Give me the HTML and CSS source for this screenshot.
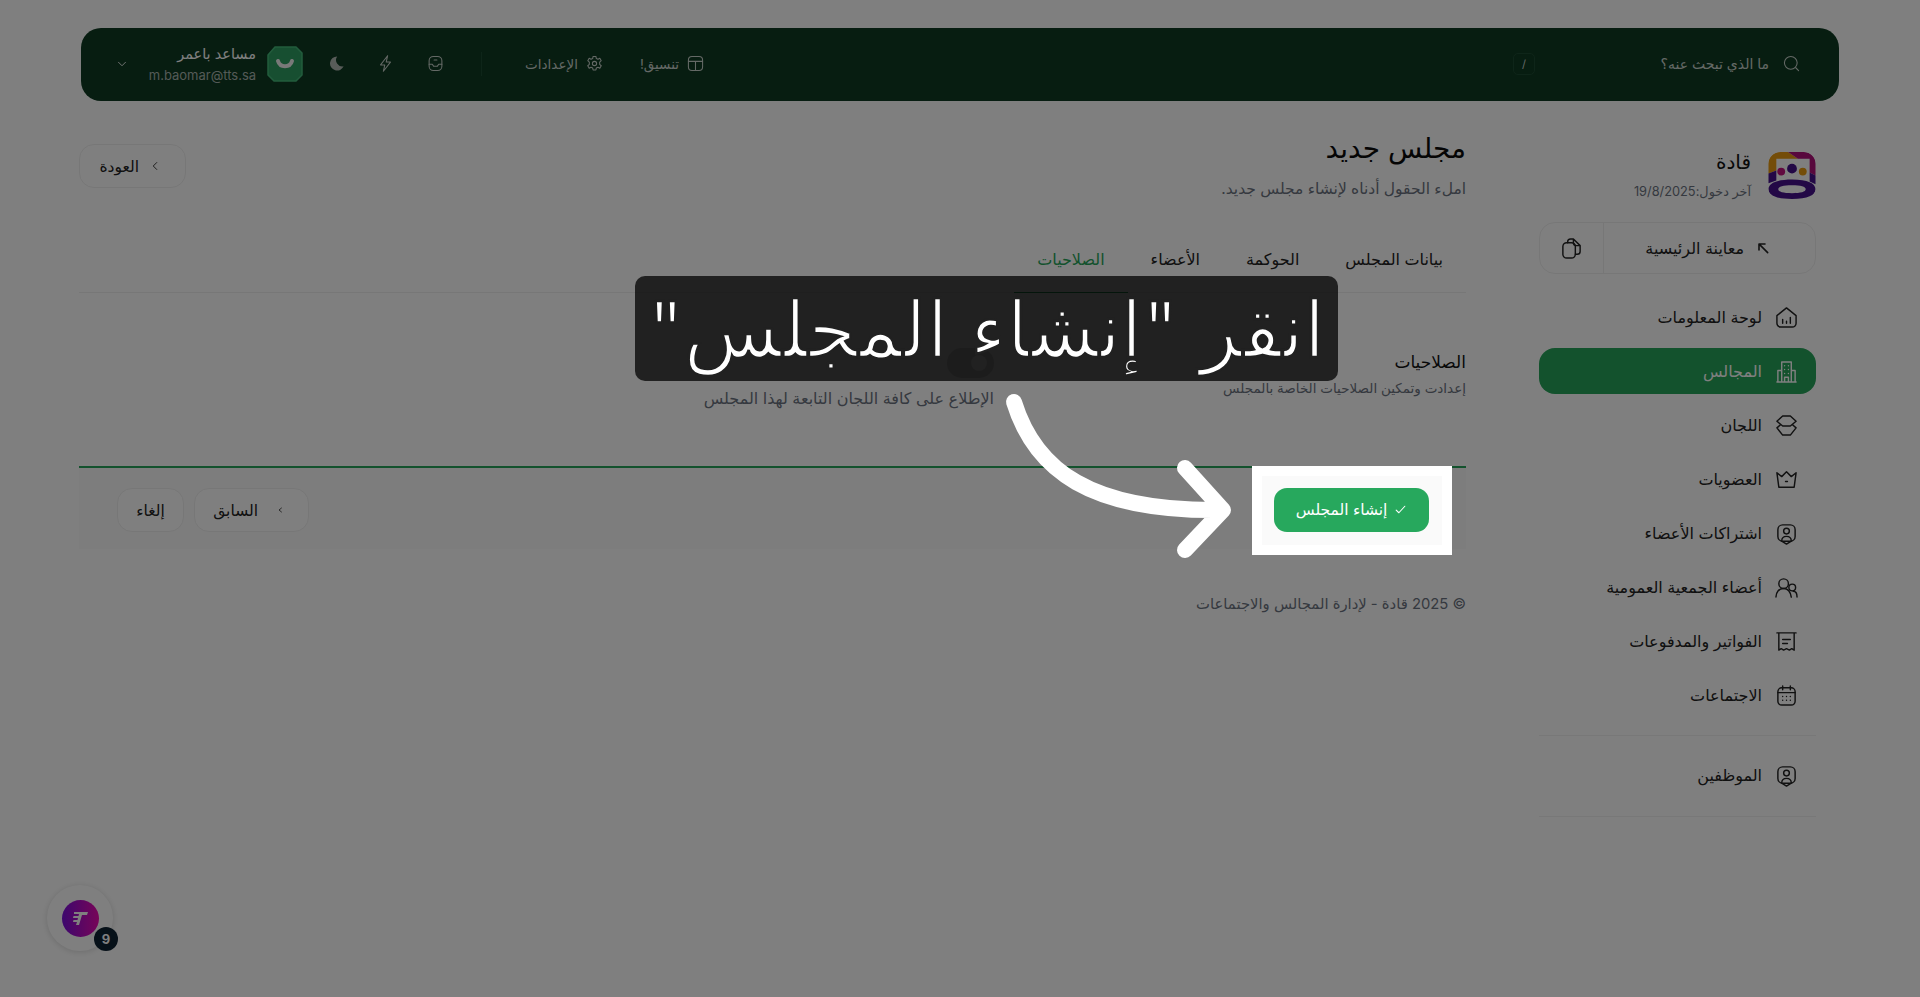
FILE: index.html
```html
<!DOCTYPE html>
<html lang="ar" dir="rtl">
<head>
    <meta charset="UTF-8">
    <meta name="viewport" content="width=device-width, initial-scale=1.0">
    <title>مجلس جديد</title>
    <link rel="stylesheet" href="styles.css">
</head>
<body>

    <div class="shell">
        <!-- Top bar -->
        <header class="topbar">
            <div class="search">
                <svg class="icon" viewBox="0 0 24 24"><circle cx="11" cy="11" r="9"/><path d="M18 18l4 4"/></svg>
                <span>ما الذي تبحث عنه؟</span>
            </div>
            <span class="kbd">/</span>
            <div class="top-actions">
                <a class="top-link"><svg class="icon" viewBox="0 0 24 24"><rect x="2" y="2" width="20" height="20" rx="5"/><path d="M2 9h20M12 9v13"/></svg>تنسيق!</a>
                <a class="top-link"><svg class="icon" viewBox="0 0 24 24"><circle cx="12" cy="12" r="3"/><path d="M10 2h4l.6 3 2.300 1 2.600-1.400 2 3.400-2.200 2v3.200l2.200 2-2 3.400-2.600-1.400-2.300 1-.6 3h-4l-.6-3-2.300-1-2.600 1.400-2-3.400 2.200-2v-3.200l-2.200-2 2-3.400 2.600 1.400 2.300-1z"/></svg>الإعدادات</a>
                <span class="top-divider"></span>
                <svg class="icon" viewBox="0 0 24 24"><rect x="3" y="2" width="18" height="20" rx="6"/><path d="M3 13h4.500l2 3h5l2-3H21M10 7h4"/></svg>
                <svg class="icon bolt" viewBox="0 0 24 24"><path d="M15 1L5 14h6l-2 9 10-13h-6z"/></svg>
                <svg class="icon moon" viewBox="0 0 24 24"><path d="M13 2a10 10 0 1 0 9 14A9 9 0 0 1 13 2z"/></svg>
                <svg class="avatar" viewBox="0 0 38 38">
                    <polygon class="avatar-bg" points="9,2 30,2 36,8 36,30 30,36 8,36 2,30 2,10"/>
                    <path class="avatar-smile" d="M12 16c2 7 12 7 14 0"/>
                </svg>
                <div class="user">
                    <strong>مساعد باعمر</strong>
                    <small>m.baomar@tts.sa</small>
                </div>
                <svg class="icon chevron" viewBox="0 0 24 24"><path d="M6 9l6 6 6-6"/></svg>
            </div>
        </header>

        <div class="layout">
            <!-- Sidebar -->
            <aside class="sidebar">
                <div class="brand">
                    <svg class="brand-logo" viewBox="0 0 48 48">
                        <path d="M0 22V12A12 12 0 0 1 12 0h8l10 7H8v12z" fill="#e89a10"/>
                        <path d="M20 0h16a12 12 0 0 1 12 12v12l-6-3V7H30z" fill="#b0107a"/>
                        <path d="M0 22l8-3v10l-8 3zM48 24l-6-3v9l6 3z" fill="#46108c"/>
                        <circle cx="24" cy="17" r="5" fill="#46108c"/>
                        <circle cx="13" cy="20" r="4" fill="#c3127e"/>
                        <circle cx="35" cy="20" r="4" fill="#e89a10"/>
                        <path fill-rule="evenodd" d="M0 38c0-6 8-10 24-10s24 4 24 10-8 10-24 10S0 44 0 38zm10 0c0 2.500 5 4 14 4s14-1.500 14-4-5-4-14-4-14 1.500-14 4z" fill="#46108c"/>
                    </svg>
                    <div>
                        <h2>قادة</h2>
                        <p>آخر دخول:19/8/2025</p>
                    </div>
                </div>

                <div class="preview">
                    <a class="preview-main"><svg class="icon" viewBox="0 0 24 24"><path d="M19 19L7 7M6 15V6h9"/></svg>معاينة الرئيسية</a>
                    <a class="preview-copy"><svg class="icon" viewBox="0 0 24 24"><rect x="3" y="6" width="13" height="16" rx="4"/><path d="M8 6V5a3 3 0 0 1 3-3h3l7 7v6a3 3 0 0 1-3 3h-2M14 2v4a3 3 0 0 0 3 3h4"/></svg></a>
                </div>

                <nav class="nav">
                    <a class="nav-item"><svg class="icon" viewBox="0 0 24 24"><path d="M2 10l10-8 10 8v8a4 4 0 0 1-4 4H6a4 4 0 0 1-4-4zM8 14v4M12 16v2M16 12v6"/></svg>لوحة المعلومات</a>
                    <a class="nav-item active"><svg class="icon" viewBox="0 0 24 24"><path d="M7 23V2h10v21M7 11H3v12h18V11h-4M2 23h20M10 6h.01M14 6h.01M10 10h.01M14 10h.01M10 14h.01M14 14h.01M10 23v-5h4v5"/></svg>المجالس</a>
                    <a class="nav-item"><svg class="icon" viewBox="0 0 24 24"><path d="M8 2h8l6 5.500-6 5H8l-6-5zM6 11l-4 3.500L8 22h8l6-7.500-4-3.500"/></svg>اللجان</a>
                    <a class="nav-item"><svg class="icon" viewBox="0 0 24 24"><path d="M2 5l5 4 5-5 5 5 5-4-2 15H4zM11 14h2"/></svg>العضويات</a>
                    <a class="nav-item"><svg class="icon" viewBox="0 0 24 24"><rect x="3" y="3" width="18" height="17" rx="5"/><circle cx="12" cy="9.500" r="3"/><path d="M7 20c0-3 2-5 5-5s5 2 5 5l-5 3z"/></svg>اشتراكات الأعضاء</a>
                    <a class="nav-item"><svg class="icon" viewBox="0 0 24 24"><circle cx="9" cy="8" r="5"/><path d="M1 22c0-5 3-9 8-9s7 3 8 9"/><circle cx="18" cy="12" r="3.500"/><path d="M19 16c2.500 0 4 2.500 4 6"/></svg>أعضاء الجمعية العمومية</a>
                    <a class="nav-item"><svg class="icon" viewBox="0 0 24 24"><path d="M2 3h20M4 3v18l2.500-1.500L9 21l3-1.500 3 1.500 2.500-1.500L20 21V3M8 10h8M8 14h5"/></svg>الفواتير والمدفوعات</a>
                    <a class="nav-item"><svg class="icon" viewBox="0 0 24 24"><rect x="3" y="4" width="18" height="18" rx="4"/><path d="M3 9h18M8 2v4M16 2v4M8 13h.01M12 13h.01M16 13h.01M8 17h.01M12 17h.01M16 17h.01"/></svg>الاجتماعات</a>
                </nav>
                <nav class="nav nav-last">
                    <a class="nav-item"><svg class="icon" viewBox="0 0 24 24"><rect x="3" y="3" width="18" height="17" rx="5"/><circle cx="12" cy="9.500" r="3"/><path d="M7 20c0-3 2-5 5-5s5 2 5 5l-5 3z"/></svg>الموظفين</a>
                </nav>
            </aside>

            <!-- Main form -->
            <main class="main">
                <div class="page-head">
                    <div>
                        <h1>مجلس جديد</h1>
                        <p>املء الحقول أدناه لإنشاء مجلس جديد.</p>
                    </div>
                    <a class="btn back-btn"><svg class="icon" viewBox="0 0 24 24"><path d="M15 6l-6 6 6 6"/></svg>العودة</a>
                </div>

                <div class="tabs">
                    <a class="tab">بيانات المجلس</a>
                    <a class="tab">الحوكمة</a>
                    <a class="tab">الأعضاء</a>
                    <a class="tab active">الصلاحيات</a>
                </div>

                <section class="perm-section">
                    <div class="perm-info">
                        <h3>الصلاحيات</h3>
                        <p>إعدادت وتمكين الصلاحيات الخاصة بالمجلس</p>
                    </div>
                    <div class="perm-item">
                        <span class="toggle"></span>
                        <p>الإطلاع على كافة اللجان التابعة لهذا المجلس</p>
                    </div>
                </section>

                <div class="form-foot">
                    <div class="spotlight">
                        <button class="create-btn"><svg class="icon" viewBox="0 0 24 24"><path d="M4 13l5 5L20 6"/></svg>إنشاء المجلس</button>
                    </div>
                    <div class="foot-btns">
                        <a class="btn prev-btn"><svg class="icon" viewBox="0 0 24 24"><path d="M15 8l-5 4 5 4"/></svg>السابق</a>
                        <a class="btn">إلغاء</a>
                    </div>
                </div>

                <p class="copyright">© 2025 قادة - لإدارة المجالس والاجتماعات</p>
            </main>
        </div>
    </div>

    <!-- Floating widget -->
    <div class="widget">
        <span class="widget-logo"><svg viewBox="0 0 24 24"><path d="M6 6h14l-1 3h-5l-3 10H8l1-3H5l.5-2h4l.5-2H5l.5-2h5l.5-2H6z"/></svg></span>
        <span class="widget-badge">9</span>
    </div>

    <!-- Tour overlay -->
    <div class="overlay"></div>
    <div class="tour-tip">انقر "إنشاء المجلس"</div>
    <svg class="tour-arrow" viewBox="0 0 260 180">
        <path d="M16 14C37 82 92 124 224 122M187 80l38 42-38 40"/>
    </svg>

</body>
</html>
```

FILE: styles.css
```css
* {
    box-sizing: border-box;
}

body {
    margin: 0;
    background: #fff;
    color: #1f2933;
    font-family: Inter, "DejaVu Sans", sans-serif;
    font-size: 14px;
    overflow: hidden;
}

h1, h2, h3, p {
    margin: 0;
}

.icon {
    width: 20px;
    height: 20px;
    flex: none;
    fill: none;
    stroke: currentColor;
    stroke-width: 1.5;
    stroke-linecap: round;
    stroke-linejoin: round;
}

.shell {
    padding: 28px 81px 0 79px;
}

/* Top bar */
.topbar {
    display: flex;
    align-items: center;
    height: 73px;
    margin-left: 2px;
    padding: 0 39px 2px 28px;
    background: #0e3a22;
    border-radius: 20px;
    color: #c9d2cc;
    font-size: 13.500px;
}

.topbar .icon {
    width: 17px;
    height: 17px;
}

.search {
    display: flex;
    align-items: center;
    gap: 14px;
    width: 265px;
    font-size: 14px;
}

.kbd {
    width: 22px;
    height: 22px;
    flex: none;
    display: flex;
    align-items: center;
    justify-content: center;
    border: 1px solid #1d4a32;
    border-radius: 5px;
    font-size: 11px;
}

.top-actions {
    display: flex;
    align-items: center;
    flex: 1;
    margin-right: 809px;
}

.top-link {
    display: flex;
    align-items: center;
    gap: 8px;
    margin-left: 37px;
}

.top-divider {
    width: 1px;
    height: 24px;
    margin: 0 6px 0 37px;
    background: #1d4a32;
}

.topbar .bolt {
    margin-right: 33px;
}

.topbar .moon {
    margin-right: 32px;
    fill: #b0b8b3;
    stroke: none;
}

.avatar {
    width: 38px;
    height: 38px;
    flex: none;
    margin-right: 24px;
}

.avatar-bg {
    fill: #2f9e62;
    stroke: #45b97a;
    stroke-width: 1.5;
    stroke-linejoin: round;
}

.avatar-smile {
    fill: none;
    stroke: #f2f2f2;
    stroke-width: 4;
    stroke-linecap: round;
}

.user {
    width: 108px;
    flex: none;
    margin-right: 10px;
    display: flex;
    flex-direction: column;
    gap: 5px;
}

.user strong {
    color: #fff;
    font-weight: 400;
    font-size: 14.500px;
}

.user small {
    direction: ltr;
    text-align: right;
    font-size: 13px;
    color: #a9b5ae;
}

.topbar .chevron {
    width: 14px;
    height: 14px;
    margin-right: 19px;
    stroke: #fff;
}

/* Two columns */
.layout {
    display: flex;
    gap: 73px;
    margin-top: 34px;
}

.sidebar {
    flex: none;
    width: 277px;
    margin-right: 23px;
    padding-top: 17px;
}

.brand {
    display: flex;
    align-items: center;
    gap: 17px;
}

.brand-logo {
    width: 48px;
    height: 47px;
    border-radius: 12px;
}

.brand h2 {
    font-size: 20px;
    line-height: 24px;
    font-weight: 500;
    color: #111;
    margin: -2px 0 10px;
}

.brand p {
    font-size: 12.800px;
    color: #6b7280;
}

.preview {
    display: flex;
    height: 52px;
    margin-top: 23px;
    border: 1px solid #efefef;
    border-radius: 16px;
    color: #222;
}

.preview-main {
    flex: 1;
    display: flex;
    align-items: center;
    gap: 11px;
    padding-right: 44px;
    font-size: 16px;
}

.preview-main .icon {
    width: 16px;
    height: 16px;
    stroke-width: 2.4;
}

.preview-copy {
    width: 64px;
    display: flex;
    align-items: center;
    justify-content: center;
    border-right: 1px solid #efefef;
}

.preview-copy .icon {
    width: 23px;
    height: 23px;
}

.nav {
    display: flex;
    flex-direction: column;
    gap: 8px;
    margin-top: 20px;
    padding-bottom: 17px;
    border-bottom: 1px solid #f0f0f0;
}

.nav-last {
    margin-top: 0;
    padding: 16px 0 18px;
}

.nav-item {
    display: flex;
    align-items: center;
    gap: 13px;
    height: 46px;
    padding-right: 18px;
    border-radius: 16px;
    font-size: 16px;
    color: #222;
}

.nav-item .icon {
    width: 23px;
    height: 23px;
}

.nav-item.active {
    background: #26a45a;
    color: #fff;
}

/* Main column */
.main {
    flex: 1;
}

.page-head {
    display: flex;
    justify-content: space-between;
    align-items: flex-start;
}

.page-head h1 {
    margin-top: -2px;
    font-size: 28px;
    line-height: 30px;
    font-weight: 400;
    color: #0b0b0b;
}

.page-head p {
    margin-top: 16px;
    font-size: 15.500px;
    line-height: 20px;
    color: #6b7280;
}

.btn {
    height: 44px;
    display: flex;
    align-items: center;
    justify-content: center;
    gap: 14px;
    padding: 0 20px;
    background: #fff;
    border: 1px solid #efefef;
    border-radius: 15px;
    font-size: 15.500px;
    color: #222;
}

.back-btn {
    width: 107px;
    margin-top: 9px;
    justify-content: flex-start;
    gap: 9px;
    padding: 0 23px 0 0;
}

.back-btn .icon {
    width: 14px;
    height: 14px;
}

.tabs {
    display: flex;
    margin-top: 33px;
    border-bottom: 1px solid #efefef;
}

.tab {
    padding: 17px 23px 23px;
    margin-bottom: -1px;
    line-height: 20px;
    font-size: 16px;
    color: #222;
    border-bottom: 1px solid transparent;
}

.tab.active {
    color: #26a45a;
    border-bottom-color: #26a45a;
}

.perm-section {
    display: flex;
    padding: 55px 0 58px;
}

.perm-info {
    width: 472px;
    padding-top: 4px;
}

.perm-info h3 {
    font-size: 17px;
    font-weight: 500;
    line-height: 20px;
    color: #111;
}

.perm-info p {
    margin-top: 6px;
    font-size: 13.500px;
    line-height: 20px;
    color: #6b7280;
}

.perm-item p {
    margin-top: 10px;
    font-size: 16px;
    line-height: 20px;
    color: #6b7280;
}

.toggle {
    display: flex;
    align-items: center;
    width: 47px;
    height: 30px;
    padding: 0 7px;
    background: #d8d8d8;
    border-radius: 15px;
}

.toggle::after {
    content: "";
    width: 16px;
    height: 16px;
    background: #fff;
    border-radius: 50%;
    margin-left: auto;
}

.form-foot {
    display: flex;
    justify-content: space-between;
    align-items: center;
    padding: 20px 37px 17px 38px;
    background: #fafafa;
    border-top: 2px solid #26a45a;
}

.foot-btns {
    display: flex;
    gap: 10px;
}

.prev-btn {
    width: 115px;
    justify-content: flex-start;
    gap: 16px;
    padding: 0 22px 0 0;
}

.prev-btn .icon {
    width: 12px;
    height: 12px;
}

.foot-btns .btn:last-child {
    width: 67px;
    padding: 0;
}

/* Sits above the overlay so the target stays lit */
.spotlight {
    position: relative;
    z-index: 20;
    margin: -23px;
    padding: 12px 13px 13px 12px;
    background: #fafafa;
    border: 10px solid #fff;
}

.create-btn {
    width: 155px;
    height: 44px;
    display: flex;
    align-items: center;
    justify-content: center;
    gap: 7px;
    background: #27a85d;
    border: none;
    border-radius: 13px;
    font-family: inherit;
    font-size: 15.500px;
    color: #fff;
}

.create-btn .icon {
    width: 13px;
    height: 13px;
    stroke-width: 2;
}

.copyright {
    margin-top: 45px;
    font-size: 14.800px;
    line-height: 20px;
    color: #6b7280;
}

/* Floating widget */
.widget {
    position: fixed;
    left: 47px;
    top: 885px;
    width: 66px;
    height: 66px;
    display: flex;
    align-items: center;
    justify-content: center;
    background: #fff;
    border-radius: 50%;
    box-shadow: 0 1px 6px rgba(0, 0, 0, 0.15);
}

.widget-logo {
    width: 37px;
    height: 37px;
    display: flex;
    align-items: center;
    justify-content: center;
    background: linear-gradient(90deg, #7a10dc, #ee0ab0);
    border-radius: 50%;
}

.widget-logo svg {
    width: 24px;
    height: 24px;
    fill: #fff;
}

.widget-badge {
    position: absolute;
    left: 47px;
    top: 42px;
    width: 24px;
    height: 24px;
    display: flex;
    align-items: center;
    justify-content: center;
    background: #0f2233;
    border-radius: 50%;
    color: #fff;
    font-size: 13px;
    font-weight: 700;
}

/* Tour overlay */
.overlay {
    position: fixed;
    inset: 0;
    z-index: 10;
    background: rgba(0, 0, 0, 0.5);
}

.tour-tip {
    position: fixed;
    left: 635px;
    top: 276px;
    z-index: 30;
    width: 703px;
    height: 105px;
    display: flex;
    align-items: center;
    justify-content: center;
    background: rgba(0, 0, 0, 0.74);
    border-radius: 10px;
    color: #fff;
    font-size: 77.500px;
    -webkit-text-stroke: 2.500px #212121;
    white-space: nowrap;
}

.tour-arrow {
    position: fixed;
    left: 998px;
    top: 388px;
    z-index: 30;
    width: 260px;
    height: 180px;
    fill: none;
    stroke: #fff;
    stroke-width: 16;
    stroke-linecap: round;
    stroke-linejoin: round;
}
```
